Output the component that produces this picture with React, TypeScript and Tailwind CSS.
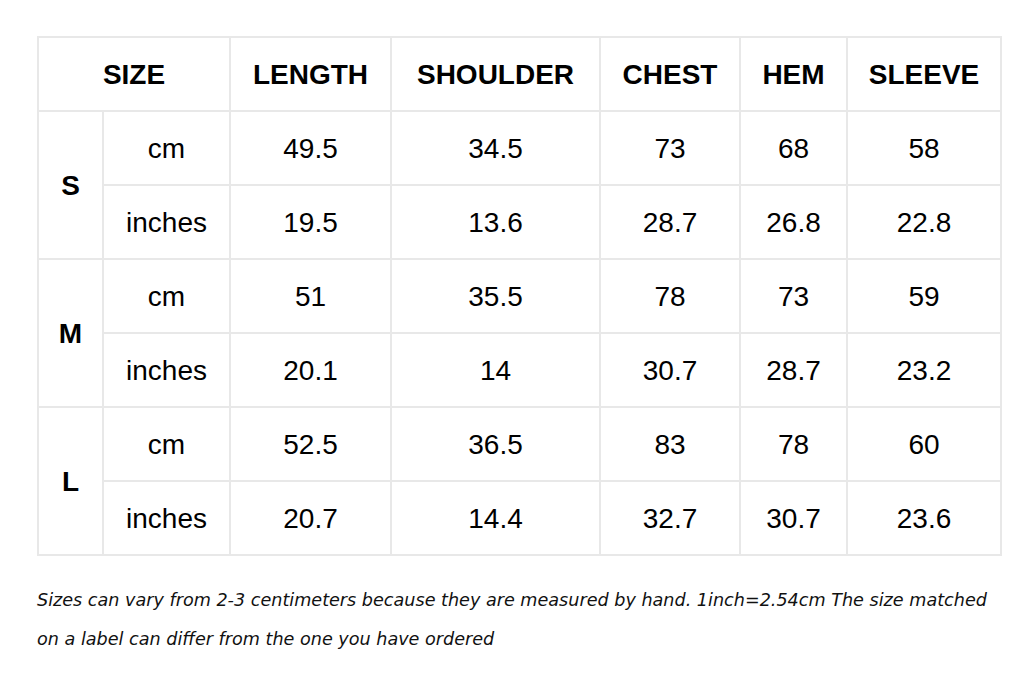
const headers = ["LENGTH", "SHOULDER", "CHEST", "HEM", "SLEEVE"];

const sizes = [
  { size: "S", cm: ["49.5", "34.5", "73", "68", "58"], inches: ["19.5", "13.6", "28.7", "26.8", "22.8"] },
  { size: "M", cm: ["51", "35.5", "78", "73", "59"], inches: ["20.1", "14", "30.7", "28.7", "23.2"] },
  { size: "L", cm: ["52.5", "36.5", "83", "78", "60"], inches: ["20.7", "14.4", "32.7", "30.7", "23.6"] },
];

const cell = "border-2 border-[#e8e8e8] text-center align-middle p-0 pt-[2px]";

export default function App() {
  return (
    <div className="bg-white min-h-[676px] pt-[36px] pl-[37px] text-black" style={{ fontFamily: '"Liberation Sans", Arial, sans-serif' }}>
      <table className="table-fixed border-collapse w-[965px] text-[28px]">
        <colgroup>
          <col className="w-[65px]" />
          <col className="w-[127px]" />
          <col className="w-[161px]" />
          <col className="w-[209px]" />
          <col className="w-[140px]" />
          <col className="w-[107px]" />
          <col className="w-[154px]" />
        </colgroup>
        <thead>
          <tr className="h-[74px]">
            <th colSpan={2} className={`${cell} font-bold`}>SIZE</th>
            {headers.map(h => (
              <th key={h} className={`${cell} font-bold`}>{h}</th>
            ))}
          </tr>
        </thead>
        <tbody>
          {sizes.map(s => (
            <>
              <tr key={s.size + "cm"} className="h-[74px]">
                <td rowSpan={2} className={`${cell} font-bold`}>{s.size}</td>
                <td className={cell}>cm</td>
                {s.cm.map((v, i) => <td key={i} className={cell}>{v}</td>)}
              </tr>
              <tr key={s.size + "in"} className="h-[74px]">
                <td className={cell}>inches</td>
                {s.inches.map((v, i) => <td key={i} className={cell}>{v}</td>)}
              </tr>
            </>
          ))}
        </tbody>
      </table>
      <p className="mt-[25px] w-[965px] italic text-[17.6px] leading-[39px] text-[#111]" style={{ fontFamily: '"DejaVu Sans", Verdana, sans-serif' }}>
        Sizes can vary from 2-3 centimeters because they are measured by hand. 1inch=2.54cm The size matched on a label can differ from the one you have ordered
      </p>
    </div>
  );
}
